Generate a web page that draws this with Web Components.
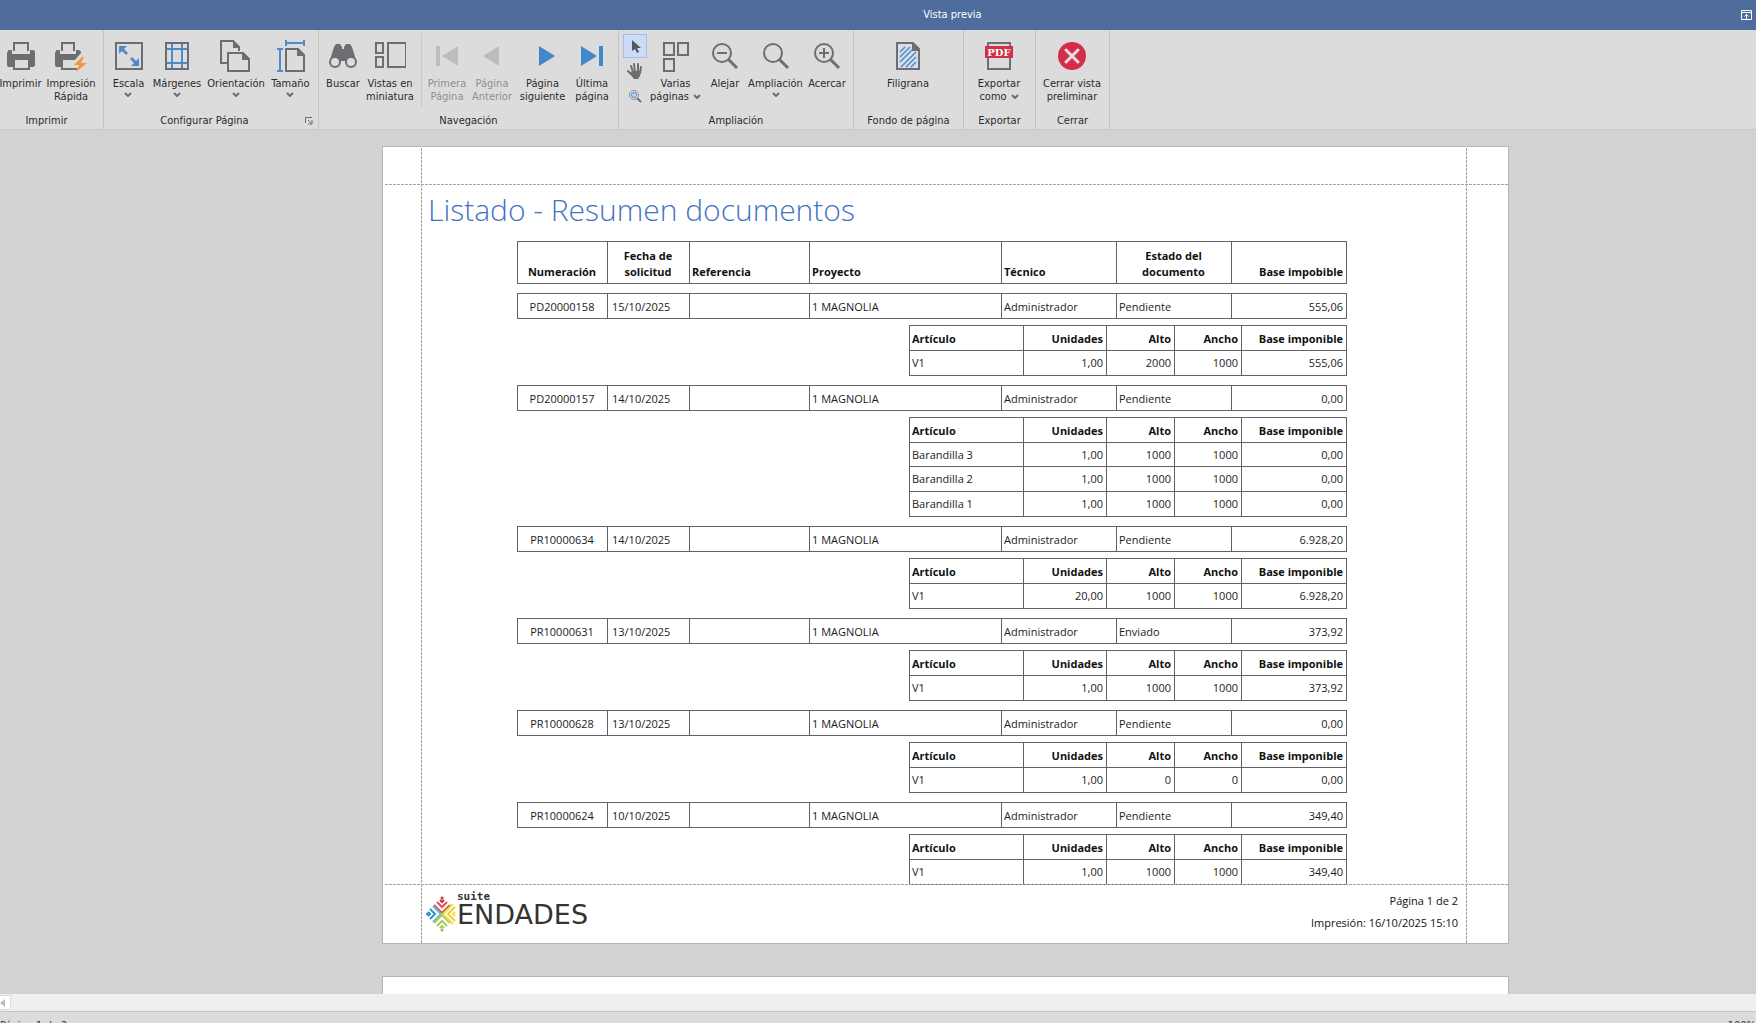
<!DOCTYPE html>
<html lang="es">
<head>
<meta charset="utf-8">
<title>Vista previa</title>
<style>
  html, body { height: 100%; margin: 0; }
  body { font: 11px/13px "DejaVu Sans Condensed", "DejaVu Sans", sans-serif; color: #2b2b2b; overflow: hidden; }
</style>
</head>
<body>
<preview-window></preview-window>

<template id="t-window">
  <style>
    :host { display: flex; flex-direction: column; height: 100vh; background: #dcdcdc; }
    svg { fill: none; stroke: none; display: block; }
    .ribbon { display: flex; flex: none; height: 99px; border-bottom: 1px solid #c8c8c8; }
    .tools { display: flex; flex-direction: column; gap: 1px; padding-top: 1px; width: 26px; align-items: center; }
    .tools button { width: 24px; height: 24px; padding: 0; border: 1px solid transparent; background: none; display: grid; place-items: center; }
    .tools button[aria-pressed="true"] { background: #ccdcf8; border-color: #a3bde8; }
    .rule { width: 1px; height: 74px; margin: 0 4px 0 5px; background: #c8c8c8; }
    .view { flex: 1; min-height: 0; overflow: hidden; background: #d2d2d2; padding: 16px 0 0 135px;
      display: flex; flex-direction: column; align-items: center; gap: 32px; }
    .scroll { flex: none; height: 17px; background: #efefef; border-bottom: 1px solid #c4c4c4; display: flex; align-items: center; }
    .scroll button { width: 11px; height: 15px; padding: 0; background: #fff; border: 1px solid #dcdcdc; border-left: 0; }
    .status { flex: none; height: 11px; box-sizing: border-box; overflow: hidden; padding-top: 7px; display: flex; justify-content: space-between; color: #333; }
  </style>
  <title-bar>Vista previa</title-bar>
  <div class="ribbon" role="toolbar">
    <ribbon-group caption="Imprimir" style="--w:104px;--pad:0px;--cap-end:10px">
      <ribbon-button style="--w:41px">
        <svg slot="icon" width="32" height="32"><path fill="#6d6d72" d="M8 2h16v9h-2V4H10v7H8zM3 11q0-1 1-1h3v4h18v-4h3q2 0 2 2v13q0 2-2 2h-3v3H8v-3H4q-2 0-2-2V13zM10 20v8h13v-8z" fill-rule="evenodd"/></svg>Imprimir</ribbon-button>
      <ribbon-button style="--w:60px">
        <svg slot="icon" width="32" height="32"><path fill="#6d6d72" d="M6 2h14v9h-2V4H8v7H6zM1 11q0-1 1-1h3v4h16v-4h2q3 0 3 3l-6 7H8v8h14v2H6v-3H2q-2 0-2-2V13z" fill-rule="evenodd"/><path fill="#f0973a" d="M27 17h2l-3 6h6L21 32l3-7h-5z"/></svg>Impresión<br>Rápida</ribbon-button>
    </ribbon-group>
    <ribbon-group caption="Configurar Página" launcher style="--w:215px">
      <ribbon-button menu style="--w:43px">
        <svg slot="icon" width="32" height="32"><path stroke="#6d6d72" stroke-width="2" d="M3 3h26v26H3z"/><path fill="#4f8bca" d="M6 6h8l-3 3 4 4-2 2-4-4-3 3zM26 26h-8l3-3-4-4 2-2 4 4 3-3z"/></svg>Escala</ribbon-button>
      <ribbon-button menu style="--w:54px">
        <svg slot="icon" width="32" height="32"><path stroke="#4f8bca" stroke-width="2" d="M11 3v26M21 3v26M4 9h24M4 23h24"/><path stroke="#6d6d72" stroke-width="2" d="M5 3h22v26H5z"/></svg>Márgenes</ribbon-button>
      <ribbon-button menu style="--w:64px">
        <svg slot="icon" width="32" height="32"><path stroke="#6d6d72" stroke-width="2" d="M7 23H1V1h12l6 6v4M8 31V13h15l6 6v12z"/><path fill="#6d6d72" d="M13 0l7 7v1h-7zM22 12l8 7v1h-8z"/></svg>Orientación</ribbon-button>
      <ribbon-button menu style="--w:45px">
        <svg slot="icon" width="32" height="32"><path stroke="#4f8bca" stroke-width="2" d="M11 3h18M11 0v6M29 0v6M5 9v22M2 9h6M2 31h6"/><path stroke="#6d6d72" stroke-width="2" d="M11 31V9h12l6 6v16z"/><path fill="#6d6d72" d="M22 8l8 7v1h-8z"/></svg>Tamaño</ribbon-button>
    </ribbon-group>
    <ribbon-group caption="Navegación" style="--w:300px">
      <ribbon-button style="--w:42px">
        <svg slot="icon" width="32" height="32"><path fill="#6d6d72" d="M9 4h4l2 3v2h2V7l2-3h4l2 3 4 13H3L7 7z"/><circle cx="8" cy="22" r="5" fill="#dcdcdc" stroke="#6d6d72" stroke-width="2"/><circle cx="24" cy="22" r="5" fill="#dcdcdc" stroke="#6d6d72" stroke-width="2"/><path fill="#6d6d72" d="M13 16h6v5h-6z"/></svg>Buscar</ribbon-button>
      <ribbon-button style="--w:52px">
        <svg slot="icon" width="32" height="32"><path stroke="#6d6d72" stroke-width="2" d="M2 3h7v10H2zM2 17h7v10H2zM14 3h18v24H14z"/></svg>Vistas en<br>miniatura</ribbon-button>
      <div class="rule"></div>
      <ribbon-button off style="--w:42px">
        <svg slot="icon" width="32" height="32"><path fill="#bcbcc1" d="M5 6h4v20H5zM27 6v20L11 16z"/></svg>Primera<br>Página</ribbon-button>
      <ribbon-button off style="--w:48px">
        <svg slot="icon" width="32" height="32"><path fill="#bcbcc1" d="M23 6v20L7 16z"/></svg>Página<br>Anterior</ribbon-button>
      <ribbon-button style="--w:53px">
        <svg slot="icon" width="32" height="32"><path fill="#4488cc" d="M12 6v20l16-10z"/></svg>Página<br>siguiente</ribbon-button>
      <ribbon-button style="--w:46px">
        <svg slot="icon" width="32" height="32"><path fill="#4488cc" d="M5 6v20l16-10zM23 6h4v20h-4z"/></svg>Última<br>página</ribbon-button>
    </ribbon-group>
    <ribbon-group caption="Ampliación" style="--w:235px">
      <div class="tools">
        <button aria-label="Puntero" aria-pressed="true"><svg width="16" height="16"><path fill="#55585f" d="M5 2v11l3-2 2 4 2-1-2-4h4z"/></svg></button>
        <button aria-label="Mano"><svg width="16" height="16"><path stroke="#6d6d72" stroke-width="2" stroke-linecap="round" d="M4 3l2 6M7 1l1 8M11 1v8M14 4l-1 6M1 8l4 4"/><path fill="#6d6d72" d="M5 8h9l-1 5-2 3H7l-4-5z"/></svg></button>
        <button aria-label="Lupa"><svg width="16" height="16"><path stroke="#6d6d72" stroke-width="2" d="M10 10l4 4"/><circle cx="7" cy="7" r="4.5" fill="#dcdcdc" stroke="#8a8f98"/><circle cx="7" cy="7" r="2.500" fill="#bcd6ee" stroke="#4f8bca"/></svg></button>
      </div>
      <ribbon-button menu="inline" style="--w:55px">
        <svg slot="icon" width="32" height="32"><path stroke="#6d6d72" stroke-width="2" d="M4 3h10v12H4zM18 3h10v12H18zM4 19h10v12H4z"/></svg>Varias<br>páginas</ribbon-button>
      <ribbon-button style="--w:44px">
        <svg slot="icon" width="32" height="32"><circle cx="13" cy="13" r="9" stroke="#6d6d72" stroke-width="2"/><path stroke="#6d6d72" stroke-width="2" d="M8 13h10"/><path stroke="#6d6d72" stroke-width="3" d="M19 19l9 9"/></svg>Alejar</ribbon-button>
      <ribbon-button menu style="--w:57px">
        <svg slot="icon" width="32" height="32"><circle cx="13" cy="13" r="9" stroke="#6d6d72" stroke-width="2"/><path stroke="#6d6d72" stroke-width="3" d="M19 19l9 9"/></svg>Ampliación</ribbon-button>
      <ribbon-button style="--w:46px">
        <svg slot="icon" width="32" height="32"><circle cx="13" cy="13" r="9" stroke="#6d6d72" stroke-width="2"/><path stroke="#6d6d72" stroke-width="2" d="M8 13h10M13 8v10"/><path stroke="#6d6d72" stroke-width="3" d="M19 19l9 9"/></svg>Acercar</ribbon-button>
    </ribbon-group>
    <ribbon-group caption="Fondo de página" style="--w:110px;--pad:0px">
      <ribbon-button style="--w:108px">
        <svg slot="icon" width="32" height="32"><path fill="#d3e0ec" d="M7 6h12v5h6v16H7z"/><path stroke="#4f8bca" stroke-width="1.500" d="M8 12l5-5M8 17L18 7M8 22l12-12M9 27l15-15M14 27l10-10M19 27l5-5"/><path stroke="#6d6d72" stroke-width="2" d="M5 29V3h16l6 6v20z"/><path fill="#6d6d72" d="M20 2l8 8v1h-8z"/></svg>Filigrana</ribbon-button>
    </ribbon-group>
    <ribbon-group caption="Exportar" style="--w:72px;--pad:0px">
      <ribbon-button menu="inline" style="--w:70px">
        <svg slot="icon" width="32" height="32"><path stroke="#6d6d72" stroke-width="2" d="M5 3h22v26H5z"/><path fill="#d22f48" d="M2 6h28v12H2z"/><text x="16" y="16" text-anchor="middle" fill="#fff" font-family="DejaVu Serif" font-weight="bold" font-size="10">PDF</text></svg>Exportar<br>como</ribbon-button>
    </ribbon-group>
    <ribbon-group caption="Cerrar" style="--w:74px;--pad:0px">
      <ribbon-button style="--w:72px">
        <svg slot="icon" width="32" height="32"><circle cx="16" cy="16" r="14" fill="#d22f48"/><path stroke="#f3dfe2" stroke-width="3" stroke-linecap="round" d="M10 10l12 12M22 10L10 22"/></svg>Cerrar vista<br>preliminar</ribbon-button>
    </ribbon-group>
  </div>
  <div class="view">
    <report-sheet></report-sheet>
    <blank-sheet></blank-sheet>
  </div>
  <div class="scroll"><button aria-label="Desplazar a la izquierda"><svg width="8" height="13"><path fill="#bdbdbd" d="M5 3v8L0 7z"/></svg></button></div>
  <div class="status"><span>Página 1 de 2</span><span>100%</span></div>
</template>

<template id="t-title">
  <style>
    :host { display: flex; flex: none; height: 30px; align-items: center; background: #4e6d9d; color: #fff; }
    span { flex: 1; text-align: center; padding: 0 0 2px 164px; }
    button { padding: 0; margin-right: 4px; border: 0; background: none; }
    svg { display: block; fill: none; stroke: #fff; }
  </style>
  <span><slot></slot></span>
  <button aria-label="Mostrar cinta"><svg width="11" height="10"><path d="M.5.5h10v9H.5zM0 2.500h11M5.500 4v5M3.500 6.500l2-2 2 2"/></svg></button>
</template>

<template id="t-group">
  <style>
    :host { display: grid; grid-template-rows: 1fr 17px; box-sizing: border-box; width: var(--w); border-right: 1px solid #c4c4c4; }
    .items { display: flex; padding: 3px 0 0 var(--pad, 3px); }
    .cap { display: grid; grid-template-columns: 1fr auto; align-items: center; padding-right: var(--cap-end, 0); }
    .cap span { text-align: center; }
    button { width: 11px; padding: 0; margin-right: 2px; border: 0; background: none; }
    svg { display: block; fill: none; stroke: #6d6d72; }
  </style>
  <div class="items"><slot></slot></div>
  <div class="cap"><span></span></div>
</template>

<template id="t-button">
  <style>
    :host { display: block; width: var(--w); }
    button { width: 100%; height: 78px; padding: 7px 0 0; border: 0; background: none; font: inherit; color: inherit;
      display: flex; flex-direction: column; align-items: center; white-space: nowrap; gap: 5px; }
    :host([off]) button { color: #8f8f8f; }
    .icon { height: 32px; }
    svg { fill: none; stroke: #6d6d72; stroke-width: 2; }
    .below { display: block; margin: 2px auto 0; }
    .after { margin-left: 4px; vertical-align: 1px; }
  </style>
  <button><span class="icon"><slot name="icon"></slot></span><span class="label"><slot></slot></span></button>
</template>

<template id="t-blank">
  <style>
    :host { display: block; flex: none; box-sizing: border-box; width: 100%; max-width: 1127px; height: 797px; background: #fff; border: 1px solid #b6b6b6; }
  </style>
</template>

<template id="t-sheet">
  <style>
    :host { display: block; position: relative; flex: none; box-sizing: border-box; width: 100%; max-width: 1127px; background: #fff;
      border: 1px solid #b6b6b6; color: #111; font: 11px/16px "Open Sans", "Noto Sans", sans-serif;
      --h: repeating-linear-gradient(90deg, #a2a2a2 0 3px, transparent 3px 4px);
      --v: repeating-linear-gradient(#a2a2a2 0 3px, transparent 3px 4px); }
    .guide { position: absolute; top: 1px; bottom: 0; width: 1px; background: var(--v); pointer-events: none; }
    .left { left: 38px; } .right { right: 41px; }
    .top, .foot { background: var(--h) no-repeat 2px 100% / 100% 1px; }
    .top { height: 38px; }
    h1 { margin: 0; padding: 3px 0 9px 45px; font-weight: 300; font-size: 30px; line-height: 44px; color: #4472c4; }
    .list { margin: 0 161px 0 134px; display: grid; gap: 9px; }
    .foot { position: relative; margin-top: -1px; height: 59px; box-sizing: border-box; background-position: 2px 0;
      display: flex; justify-content: space-between; padding: 8px 50px 0 43px; }
    .logo { display: flex; align-items: flex-start; color: #333; }
    .logo svg { margin-top: 4px; }
    .words { display: grid; margin-left: 1px; }
    .suite { font: bold 11px/10px "DejaVu Sans Mono", monospace; }
    .name { font: 27px/25px "DejaVu Sans", sans-serif; }
    .meta { text-align: right; display: grid; align-content: start; gap: 6px; padding-top: 1px; }
  </style>
  <div class="guide left"></div><div class="guide right"></div>
  <div class="top"></div>
  <h1>Listado - Resumen documentos</h1>
  <div class="list"></div>
  <div class="foot">
    <div class="logo">
      <svg width="30" height="36" fill="none" stroke-width="2">
        <g stroke="#d9534f"><path d="M8 9l8 8 8-8"/><path d="M11 6l5 5 5-5"/><path d="M14 4l2 2 2-2" stroke="#c8323c"/></g><circle cx="16" cy="2" r="1.500" fill="#c8323c"/>
        <g stroke="#2b93c8"><path d="M7 10l8 8-8 8" stroke="#6db3dc"/><path d="M4 13l5 5-5 5"/><path d="M2 16l2 2-2 2"/></g><circle cx="1.500" cy="18" r="1.500" fill="#2b93c8"/>
        <g stroke="#a9c957"><path d="M8 27l8-8 8 8"/><path d="M11 30l5-5 5 5"/><path d="M14 32l2-2 2 2"/></g><circle cx="16" cy="34" r="1.500" fill="#8fbf4d"/>
        <g stroke="#f0df3c"><path d="M27 8l-10 10 10 10"/><path d="M29 11l-7 7 7 7" stroke="#f3c93d"/><path d="M29 16l-2 2 2 2"/></g>
      </svg>
      <div class="words"><span class="suite">suite</span><span class="name">ENDADES</span></div>
    </div>
    <div class="meta"><span>Página 1 de 2</span><span>Impresión: 16/10/2025 15:10</span></div>
  </div>
</template>

<template id="t-record">
  <style>
    :host { display: grid; gap: 6px; }
    table { border-collapse: collapse; table-layout: fixed; width: 100%; }
    th, td { border: 1px solid #626266; padding: 1px 3px 0 2px; height: 23px; text-align: left; box-sizing: content-box; }
    td { color: #1c1c1c; }
    .n { text-align: right; } .c { text-align: center; } .d { padding-left: 4px; }
    .head th { height: 35px; padding-top: 3px; padding-bottom: 3px; vertical-align: bottom; }
    .sub { width: 438px; justify-self: end; }
    .sub th { height: 22px; padding-top: 2px; }
    .sub td { height: 24px; padding-top: 0; }
    .sub tbody tr:first-child:not(:only-child) td { height: 23px; }
  </style>
</template>

<script>
const use = (el, id) => {
  const root = el.attachShadow({ mode: 'open' });
  root.append(document.getElementById(id).content.cloneNode(true));
  return root;
};

customElements.define('title-bar', class extends HTMLElement {
  constructor() { super(); use(this, 't-title'); }
});

customElements.define('ribbon-group', class extends HTMLElement {
  connectedCallback() {
    if (this.shadowRoot) return;
    const root = use(this, 't-group');
    root.querySelector('.cap span').textContent = this.getAttribute('caption');
    if (this.hasAttribute('launcher')) {
      const b = document.createElement('button');
      b.setAttribute('aria-label', 'Más opciones');
      b.innerHTML = '<svg width="8" height="8"><path d="M.5 6V.5H7M3 3l4 4M7 3v4H3"/></svg>';
      root.querySelector('.cap').append(b);
    }
  }
});

customElements.define('ribbon-button', class extends HTMLElement {
  connectedCallback() {
    if (this.shadowRoot) return;
    const root = use(this, 't-button');
    if (this.hasAttribute('off')) root.querySelector('button').disabled = true;
    if (this.hasAttribute('menu')) {
      const cls = this.getAttribute('menu') === 'inline' ? 'after' : 'below';
      root.querySelector('.label').insertAdjacentHTML('beforeend',
        `<svg class="${cls}" width="8" height="5"><path d="M1 1l3 3 3-3"/></svg>`);
    }
  }
});

customElements.define('blank-sheet', class extends HTMLElement {
  constructor() { super(); use(this, 't-blank'); }
});

const cols = widths => '<colgroup>' + widths.map(w => w ? `<col style="width:${w}px">` : '<col>').join('') + '</colgroup>';
const MAIN = [90, 82, 120, 0, 115, 115, 115];
const SUB = [0, 83, 68, 67, 105];

customElements.define('report-heading', class extends HTMLElement {
  constructor() {
    super();
    use(this, 't-record').append(Object.assign(document.createElement('table'), { className: 'head', innerHTML:
      cols(MAIN) + `<thead><tr><th class="c">Numeración</th><th class="c">Fecha de solicitud</th><th>Referencia</th><th>Proyecto</th>
      <th>Técnico</th><th class="c">Estado del<br>documento</th><th class="n">Base impobible</th></tr></thead>` }));
  }
});

customElements.define('report-record', class extends HTMLElement {
  set data([num, date, state, total, items]) {
    const root = use(this, 't-record');
    root.append(Object.assign(document.createElement('table'), { innerHTML:
      cols(MAIN) + `<tbody><tr><td class="c">${num}</td><td class="d">${date}</td><td></td><td>1 MAGNOLIA</td>
      <td>Administrador</td><td>${state}</td><td class="n">${total}</td></tr></tbody>` }));
    const rows = items.map(([name, ...v]) => `<tr><td>${name}</td>${v.map(x => `<td class="n">${x}</td>`).join('')}</tr>`).join('');
    root.append(Object.assign(document.createElement('table'), { className: 'sub', innerHTML:
      cols(SUB) + `<thead><tr><th>Artículo</th><th class="n">Unidades</th><th class="n">Alto</th><th class="n">Ancho</th>
      <th class="n">Base imponible</th></tr></thead><tbody>${rows}</tbody>` }));
  }
});

const RECORDS = [
  ['PD20000158', '15/10/2025', 'Pendiente', '555,06', [['V1', '1,00', '2000', '1000', '555,06']]],
  ['PD20000157', '14/10/2025', 'Pendiente', '0,00', [
    ['Barandilla 3', '1,00', '1000', '1000', '0,00'],
    ['Barandilla 2', '1,00', '1000', '1000', '0,00'],
    ['Barandilla 1', '1,00', '1000', '1000', '0,00']]],
  ['PR10000634', '14/10/2025', 'Pendiente', '6.928,20', [['V1', '20,00', '1000', '1000', '6.928,20']]],
  ['PR10000631', '13/10/2025', 'Enviado', '373,92', [['V1', '1,00', '1000', '1000', '373,92']]],
  ['PR10000628', '13/10/2025', 'Pendiente', '0,00', [['V1', '1,00', '0', '0', '0,00']]],
  ['PR10000624', '10/10/2025', 'Pendiente', '349,40', [['V1', '1,00', '1000', '1000', '349,40']]]
];

customElements.define('report-sheet', class extends HTMLElement {
  constructor() {
    super();
    const list = use(this, 't-sheet').querySelector('.list');
    list.append(document.createElement('report-heading'));
    for (const r of RECORDS) {
      const el = document.createElement('report-record');
      el.data = r;
      list.append(el);
    }
  }
});

customElements.define('preview-window', class extends HTMLElement {
  constructor() { super(); use(this, 't-window'); }
});
</script>
</body>
</html>
